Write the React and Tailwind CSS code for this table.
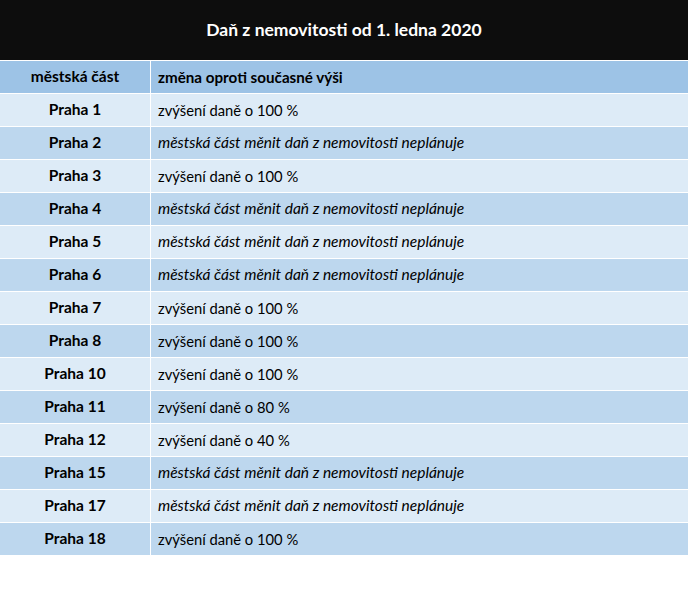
const rows = [
  ["Praha 1", "zvýšení daně o 100 %", false],
  ["Praha 2", "městská část měnit daň z nemovitosti neplánuje", true],
  ["Praha 3", "zvýšení daně o 100 %", false],
  ["Praha 4", "městská část měnit daň z nemovitosti neplánuje", true],
  ["Praha 5", "městská část měnit daň z nemovitosti neplánuje", true],
  ["Praha 6", "městská část měnit daň z nemovitosti neplánuje", true],
  ["Praha 7", "zvýšení daně o 100 %", false],
  ["Praha 8", "zvýšení daně o 100 %", false],
  ["Praha 10", "zvýšení daně o 100 %", false],
  ["Praha 11", "zvýšení daně o 80 %", false],
  ["Praha 12", "zvýšení daně o 40 %", false],
  ["Praha 15", "městská část měnit daň z nemovitosti neplánuje", true],
  ["Praha 17", "městská část měnit daň z nemovitosti neplánuje", true],
  ["Praha 18", "zvýšení daně o 100 %", false],
]

export default function App() {
  return (
    <div className="min-h-[592px] w-[689px] bg-white font-['Lato','Liberation_Sans',sans-serif] text-[15.5px] text-black">
      <div className="flex w-[688px] flex-col gap-px bg-white">
        <div className="flex h-[60px] items-center justify-center bg-[#0d0d0d] text-[17.5px] font-bold text-white">
          Daň z nemovitosti od 1. ledna 2020
        </div>
        <div className="grid h-[32px] grid-cols-[150px_1fr] gap-px font-bold">
          <div className="flex items-center justify-center bg-[#9dc3e6]">městská část</div>
          <div className="flex items-center bg-[#9dc3e6] pl-[7px] text-[15.2px]">změna oproti současné výši</div>
        </div>
        {rows.map(([name, text, italic], i) => {
          const bg = i % 2 === 0 ? "bg-[#ddebf7]" : "bg-[#bdd7ee]"
          return (
            <div key={name} className="grid h-[32px] grid-cols-[150px_1fr] gap-px">
              <div className={`flex items-center justify-center font-bold ${bg}`}>{name}</div>
              <div className={`flex items-center pl-[7px] ${italic ? "italic" : "text-[14.75px]"} ${bg}`}>{text}</div>
            </div>
          )
        })}
      </div>
    </div>
  )
}
